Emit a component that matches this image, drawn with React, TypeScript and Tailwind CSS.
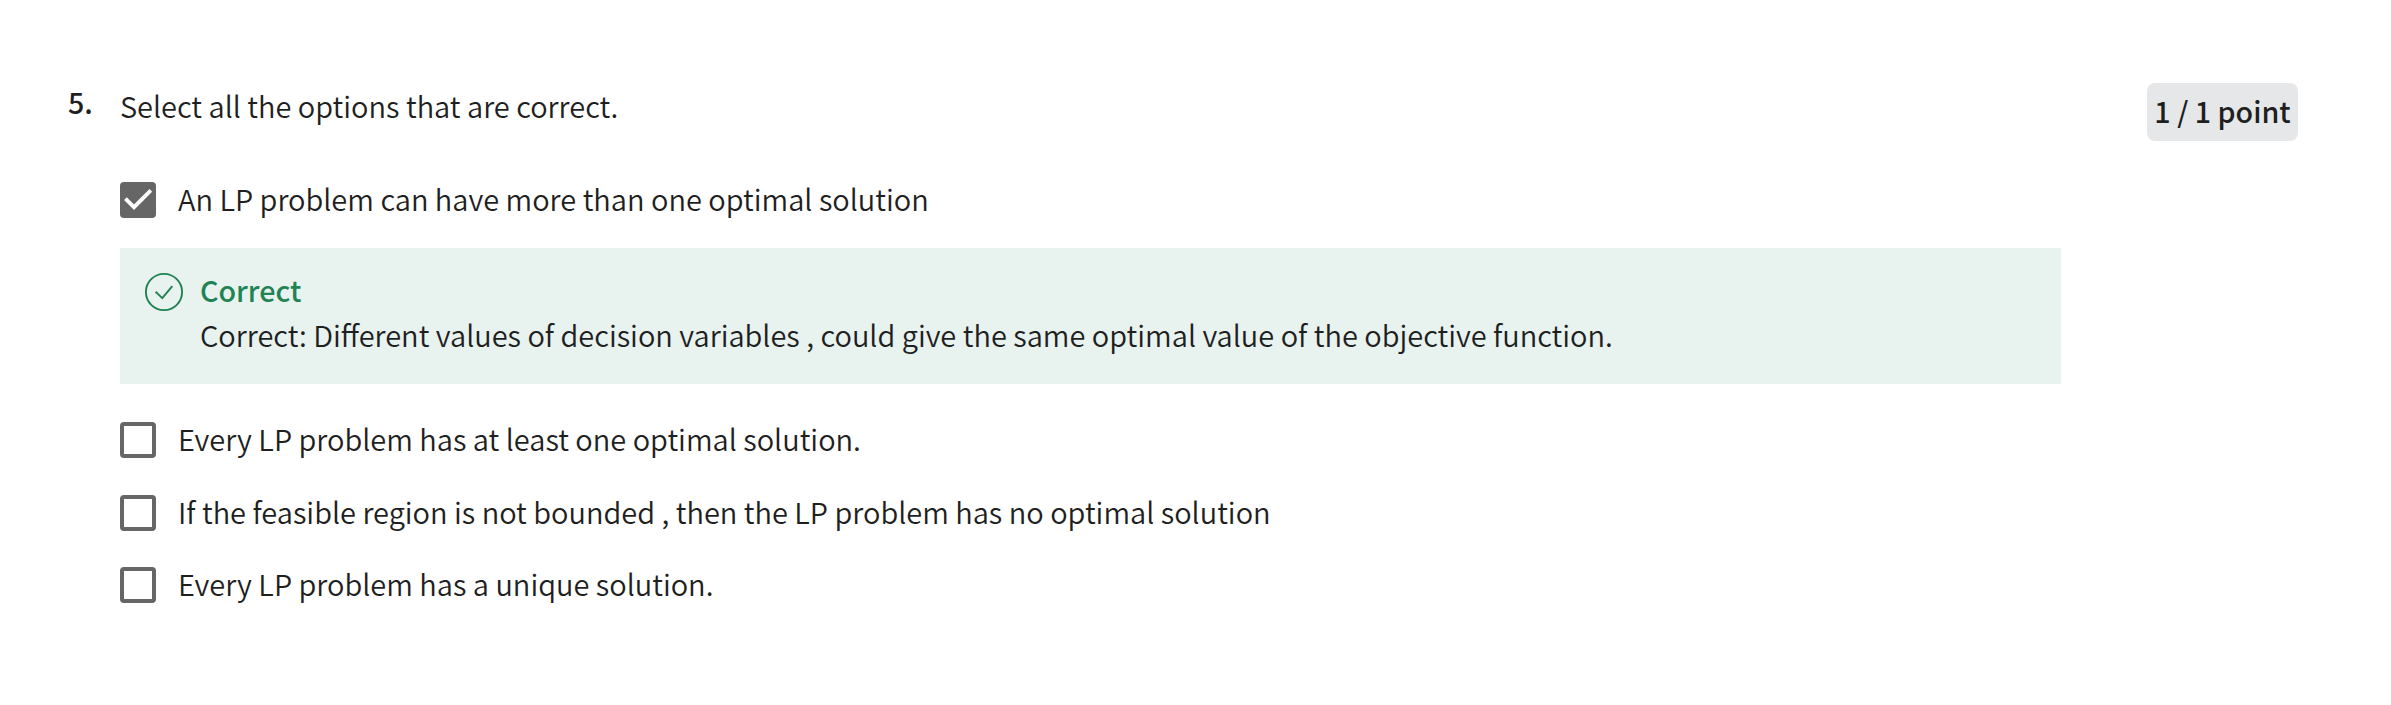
import React from "react";

function Checkbox({ checked = false }: { checked?: boolean }) {
  if (!checked) {
    return <span className="size-9 shrink-0 rounded-[4px] border-4 border-[#666666] bg-white" />;
  }
  return (
    <span className="size-9 shrink-0 rounded-[4px] bg-[#666666]">
      <svg viewBox="0 0 36 36" className="block size-9" fill="none" stroke="#fff" strokeWidth="3.8">
        <path d="M5.4 16.6 L14 25.2 L30.8 8.4" />
      </svg>
    </span>
  );
}

function Option({ label, checked }: { label: string; checked?: boolean }) {
  return (
    <label className="flex h-[72.5px] items-center gap-[22px]">
      <Checkbox checked={checked} />
      <span className="pb-1 whitespace-nowrap">{label}</span>
    </label>
  );
}

export default function App() {
  return (
    <main className="flex h-[705px] w-full items-start bg-white pt-[83px] font-['Noto_Sans_CJK_SC_DemiLight','Noto_Sans_CJK_SC',sans-serif] text-[28.97px] leading-[44px] text-[#1f1f1f]">
      <div className="-mt-[3px] ml-[68px] w-[52px] font-['Noto_Sans_CJK_SC',sans-serif] text-[28.65px] font-medium">5.</div>
      <section className="w-[1941px]">
        <p className="h-[81px]">Select all the options that are correct.</p>
        <Option checked label="An LP problem can have more than one optimal solution" />
        <div className="mt-[11.5px] mb-5 flex h-[136px] gap-4 bg-[#e8f2ee] pt-5 pl-6">
          <svg viewBox="0 0 40 40" className="mt-1 size-10" fill="none" stroke="#1f8354" strokeWidth="1.9">
            <circle cx="20" cy="20" r="18.1" />
            <path d="M11.6 19.8 L18.3 26.2 L28.3 14.2" />
          </svg>
          <div>
            <p className="font-['Noto_Sans_CJK_SC',sans-serif] text-[28.65px] font-medium text-[#1f8354]">Correct</p>
            <p>Correct: Different values of decision variables , could give the same optimal value of the objective function.</p>
          </div>
        </div>
        <Option label="Every LP problem has at least one optimal solution." />
        <Option label="If the feasible region is not bounded , then the LP problem has no optimal solution" />
        <Option label="Every LP problem has a unique solution." />
      </section>
      <aside className="ml-[86px] flex h-[58px] w-[151px] items-center justify-center rounded-lg bg-[#e5e7e9] pb-0.5 font-['Noto_Sans_CJK_SC',sans-serif] text-[28.65px] font-medium whitespace-nowrap">1 / 1 point</aside>
    </main>
  );
}
